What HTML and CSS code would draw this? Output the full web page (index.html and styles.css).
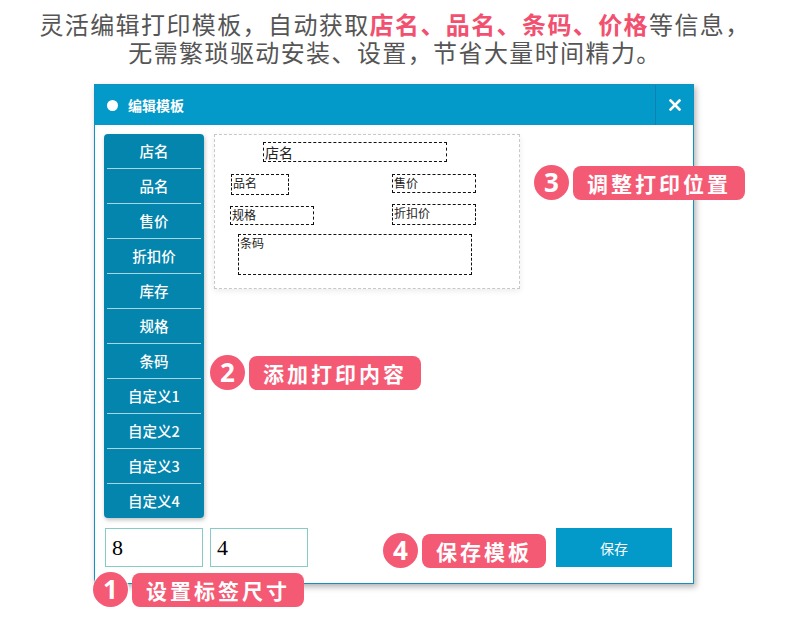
FILE: index.html
```html
<!DOCTYPE html>
<html lang="zh-CN">
<head>
    <meta charset="UTF-8">
    <title>编辑模板</title>
    <link rel="stylesheet" href="styles.css">
</head>
<body>
    <div class="intro">
        <div class="line1">灵活编辑打印模板，自动获取<b>店名、品名、条码、价格</b>等信息，</div>
        <div class="line2">无需繁琐驱动安装、设置，节省大量时间精力。</div>
    </div>

    <div class="window">
        <div class="titlebar">
            <span class="dot"></span>
            <span class="title">编辑模板</span>
            <span class="close">
                <svg width="12" height="12" viewBox="0 0 12 12">
                    <path d="M1.5 1.5 L10.5 10.5 M10.5 1.5 L1.5 10.5" stroke="#fff" stroke-width="2.6" stroke-linecap="square"/>
                </svg>
            </span>
        </div>
        <div class="body">
            <div class="main">
                <ul class="fields">
                    <li>店名</li>
                    <li>品名</li>
                    <li>售价</li>
                    <li>折扣价</li>
                    <li>库存</li>
                    <li>规格</li>
                    <li>条码</li>
                    <li>自定义1</li>
                    <li>自定义2</li>
                    <li>自定义3</li>
                    <li>自定义4</li>
                </ul>
                <div class="canvas">
                    <div class="item big" style="left:48px;top:7px;width:184px;height:20px">店名</div>
                    <div class="item" style="left:16px;top:39px;width:58px;height:21px">品名</div>
                    <div class="item" style="left:177px;top:39px;width:84px;height:19px">售价</div>
                    <div class="item" style="left:15px;top:71px;width:84px;height:19px">规格</div>
                    <div class="item" style="left:177px;top:69px;width:84px;height:21px">折扣价</div>
                    <div class="item" style="left:23px;top:99px;width:234px;height:41px">条码</div>
                </div>
            </div>
            <div class="footer">
                <input type="text" class="size" value="8">
                <input type="text" class="size" value="4">
                <button class="save">保存</button>
            </div>
        </div>

        <div class="callout c3"><span class="num">3</span><span class="tag">调整打印位置</span></div>
        <div class="callout c2"><span class="num">2</span><span class="tag">添加打印内容</span></div>
        <div class="callout c1"><span class="num">1</span><span class="tag">设置标签尺寸</span></div>
        <div class="callout c4"><span class="num">4</span><span class="tag">保存模板</span></div>
    </div>
</body>
</html>
```

FILE: styles.css
```css
body {
    margin: 0;
    padding: 0 0 34px 0;
    font-family: "Noto Sans CJK SC", "Noto Sans", sans-serif;
    background: #fff;
}
.intro {
    padding-top: 10px;
    text-align: center;
    font-size: 24px;
    line-height: 28px;
    color: #555;
    letter-spacing: 1.4px;
}
.intro b {
    color: #f2506f;
    font-weight: 700;
}
.window {
    position: relative;
    margin: 18px 0 0 94px;
    width: 598px;
    height: 498px;
    border: 1px solid #1190c2;
    box-shadow: 2px 3px 6px rgba(0, 0, 0, 0.3);
    background: #fff;
}
.titlebar {
    display: flex;
    align-items: center;
    height: 40px;
    background: #0399c9;
    color: #fff;
}
.dot {
    width: 11px;
    height: 11px;
    border-radius: 50%;
    background: #fff;
    margin-left: 12px;
}
.title {
    margin-left: 10px;
    font-size: 14px;
    font-weight: 700;
}
.close {
    margin-left: auto;
    width: 37px;
    height: 40px;
    border-left: 1px solid #0a82b2;
    display: flex;
    align-items: center;
    justify-content: center;
}
.body {
    padding: 9px 9px 0 9px;
}
.main {
    display: flex;
    align-items: flex-start;
    gap: 10px;
}
.fields {
    list-style: none;
    margin: 0;
    padding: 0 3px;
    width: 94px;
    background: #0485ae;
    border-radius: 4px;
    box-shadow: 1px 2px 4px rgba(0, 0, 0, 0.25);
}
.fields li {
    height: 34px;
    line-height: 34px;
    text-align: center;
    color: #fff;
    font-size: 14.5px;
    font-weight: 500;
    border-bottom: 1px solid #a9d6e2;
}
.fields li:last-child {
    border-bottom: none;
}
.canvas {
    position: relative;
    width: 304px;
    height: 153px;
    border: 1px dashed #c8c8c8;
    box-shadow: 0 2px 6px rgba(0, 0, 0, 0.08);
}
.item {
    position: absolute;
    box-sizing: border-box;
    border: 1px dashed #111;
    font-size: 12px;
    line-height: 15px;
    padding-left: 1px;
    color: #222;
}
.item.big {
    font-size: 14px;
    line-height: 18px;
}
.footer {
    display: flex;
    align-items: center;
    margin-top: 10px;
}
.size {
    box-sizing: border-box;
    width: 98px;
    height: 39px;
    margin: 0 6px 0 1px;
    padding: 0 6px;
    border: 1px solid #86cbc6;
    font-family: "Liberation Serif", serif;
    font-size: 22px;
    color: #000;
    outline: none;
}
.save {
    margin-left: 242px;
    width: 116px;
    height: 39px;
    border: none;
    background: #0399c9;
    color: #fff;
    font-family: "Noto Sans CJK SC", sans-serif;
    font-size: 14px;
}
.callout {
    position: absolute;
    display: flex;
    align-items: center;
    gap: 4px;
    white-space: nowrap;
}
.num {
    width: 35px;
    height: 35px;
    border-radius: 50%;
    background: #f45a74;
    color: #fff;
    font-family: "Noto Sans", sans-serif;
    font-weight: 700;
    font-size: 26px;
    line-height: 35px;
    text-align: center;
    box-shadow: 0 0 1px 1px rgba(255, 255, 255, 0.8);
}
.tag {
    height: 34px;
    line-height: 34px;
    padding: 0 14px;
    border-radius: 8px;
    background: #f45a74;
    color: #fff;
    font-size: 21px;
    font-weight: 700;
    letter-spacing: 3px;
}
.c3 { left: 439px; top: 80px; }
.c2 { left: 115px; top: 270px; }
.c1 { left: -2px; top: 487px; }
.c4 { left: 288px; top: 448px; }
```
